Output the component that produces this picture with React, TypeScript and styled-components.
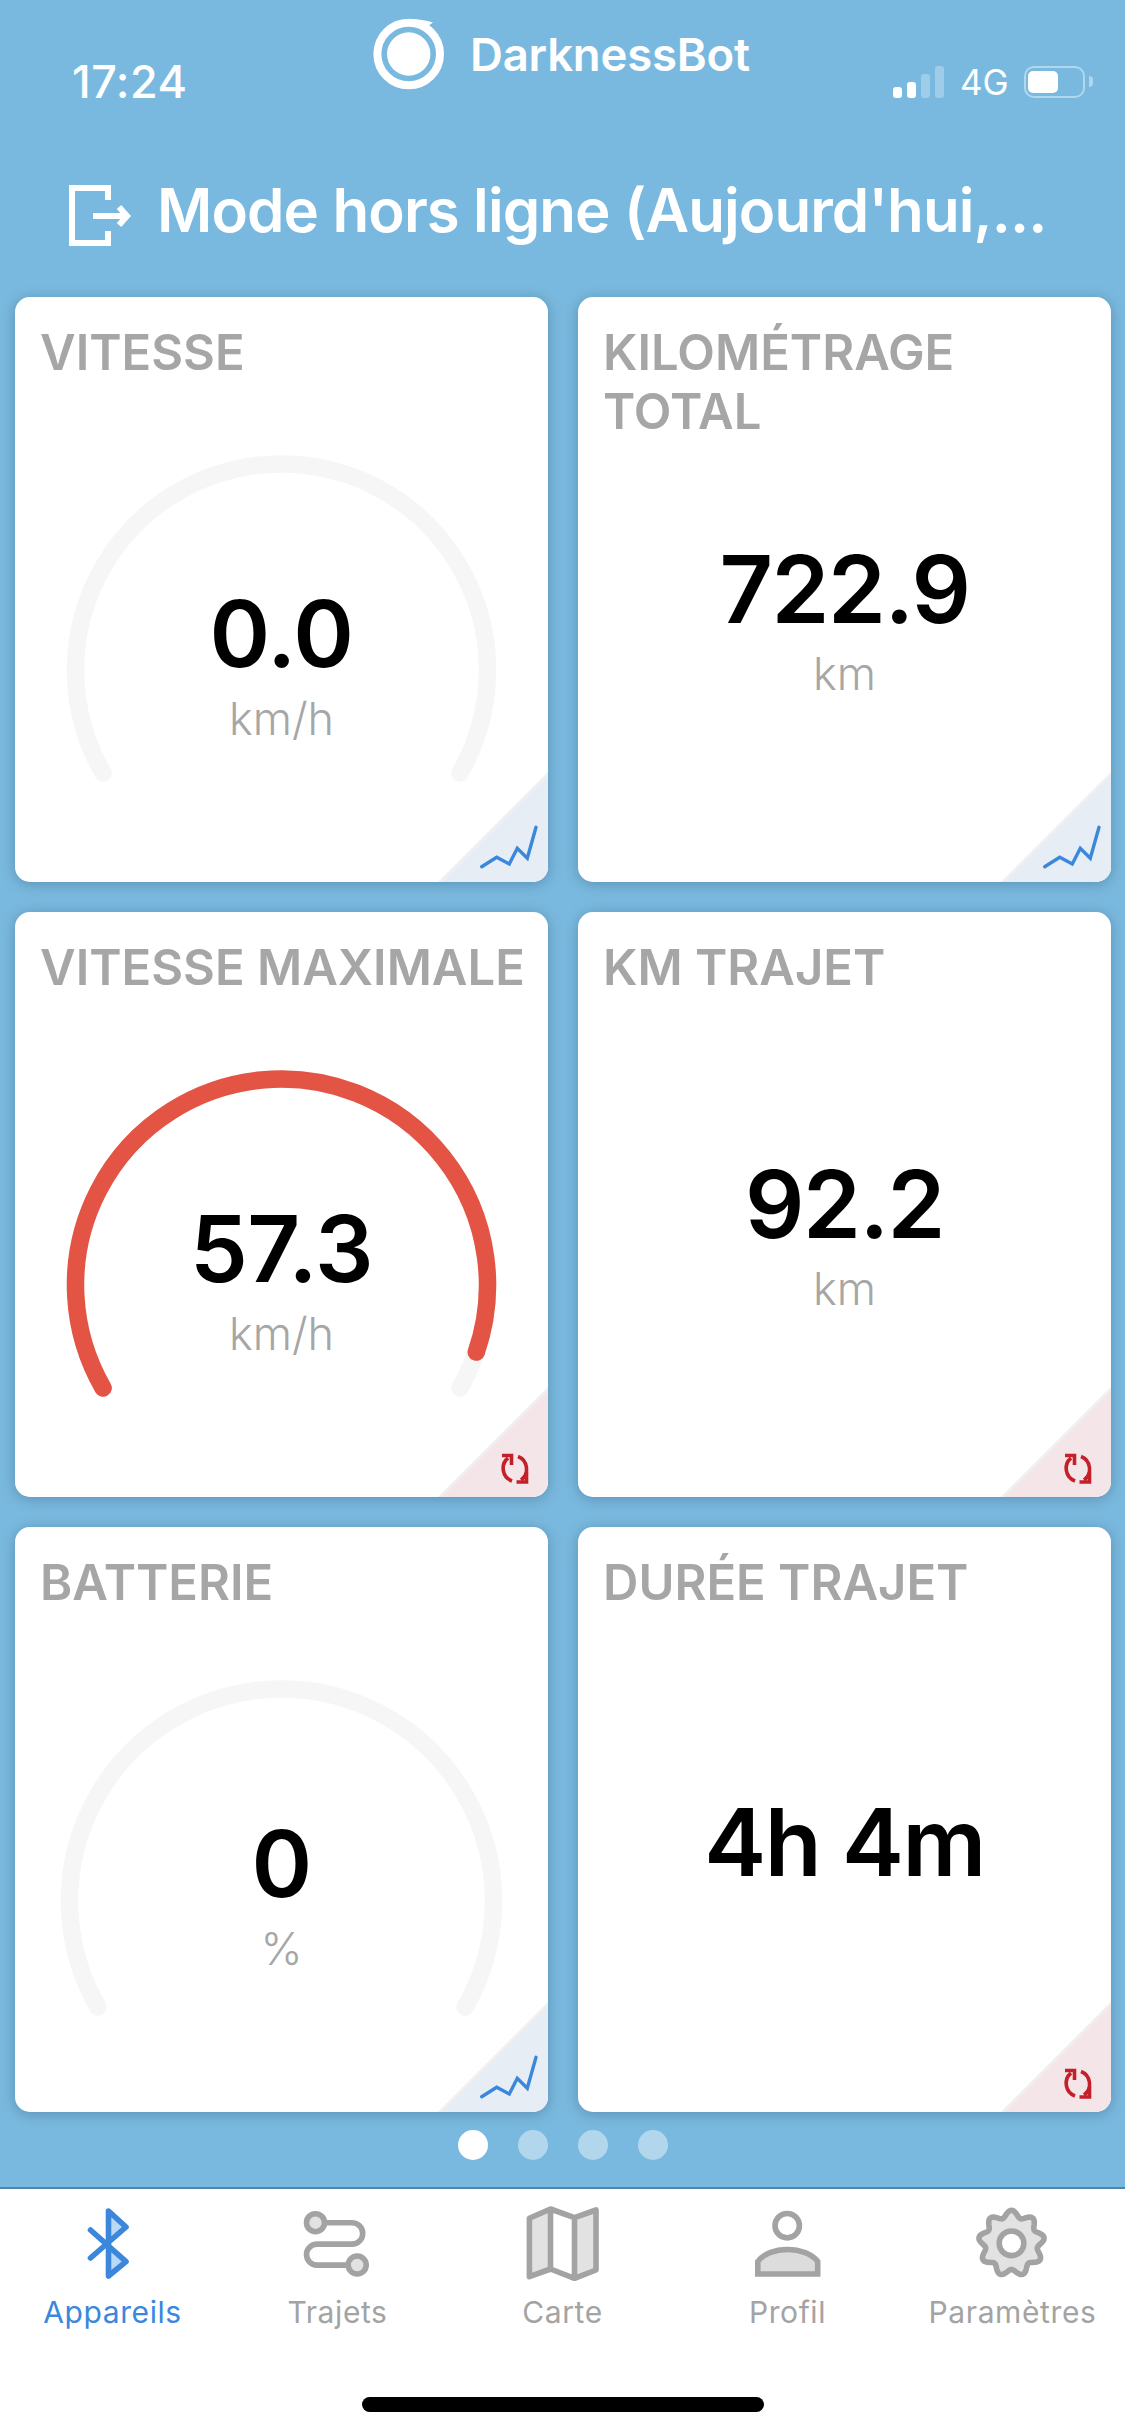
import React from "react";
import styled, { createGlobalStyle } from "styled-components";

const Global = createGlobalStyle`
  html, body { margin: 0; padding: 0; background: #7ab9df; }
  body { font-family: Inter, "Liberation Sans", sans-serif; }
  #root { width: 1125px; height: 2436px; }
`;

const Page = styled.div`
  width: 1125px;
  height: 2436px;
  background: #7ab9df;
  display: flex;
  flex-direction: column;
  overflow: hidden;
`;

const StatusBar = styled.div`
  height: 120px;
  display: flex;
  align-items: flex-start;
  color: #fff;
  flex: none;
`;

const Time = styled.div`
  width: 301px;
  margin: 57px 0 0 72px;
  font-size: 45px;
  line-height: 50px;
  font-weight: 500;
  letter-spacing: 0.5px;
`;

const Brand = styled.div`
  display: flex;
  align-items: center;
  gap: 25px;
  margin-top: 18px;
  height: 72px;
  width: 520px;
  font-size: 45.5px;
  font-weight: 600;
  letter-spacing: -0.2px;
`;

const Signal = styled.div`
  display: flex;
  align-items: flex-end;
  gap: 5px;
  height: 32px;
  margin: 66px 0 0 0;
  flex: none;
`;

const SignalBar = styled.i<{ $h: number; $dim?: boolean }>`
  display: block;
  width: 9px;
  height: ${(p) => p.$h}px;
  border-radius: 3px;
  background: ${(p) => (p.$dim ? "rgba(255,255,255,0.28)" : "#fff")};
`;

const Net = styled.span`
  font-size: 35px;
  font-weight: 400;
  line-height: 32px;
  margin: 0 0 0 11px;
`;

const Battery = styled.div`
  position: relative;
  width: 61px;
  height: 32px;
  box-sizing: border-box;
  border: 2.5px solid rgba(255, 255, 255, 0.42);
  border-radius: 10px;
  margin-left: 10px;
  padding: 2.5px;
  &::after {
    content: "";
    position: absolute;
    right: -10px;
    top: 8px;
    width: 4px;
    height: 11px;
    border-radius: 0 4px 4px 0;
    background: rgba(255, 255, 255, 0.42);
  }
`;

const BatteryFill = styled.div`
  width: 30px;
  height: 22px;
  border-radius: 5px;
  background: #fff;
`;

const Header = styled.div`
  height: 177px;
  flex: none;
  display: flex;
  align-items: flex-start;
  padding-left: 69px;
  box-sizing: border-box;
  color: #fff;
`;

const HeaderIcon = styled.svg`
  width: 62px;
  height: 62px;
  margin-top: 65px;
  flex: none;
`;

const HeaderTitle = styled.div`
  margin: 54px 0 0 26px;
  font-size: 60px;
  line-height: 72px;
  font-weight: 600;
  letter-spacing: -0.9px;
  white-space: nowrap;
`;

const Grid = styled.div`
  display: grid;
  grid-template-columns: 533px 533px;
  grid-auto-rows: 585px;
  gap: 30px;
  padding: 0 14px 0 15px;
  flex: none;
`;

const CardBox = styled.div`
  position: relative;
  background: #fff;
  border-radius: 15px;
  overflow: hidden;
`;

const CardShadow = styled.div`
  border-radius: 15px;
  box-shadow: 0 2px 14px rgba(20, 50, 80, 0.3);
`;

const CardTitle = styled.div`
  height: 120px;
  box-sizing: border-box;
  padding: 26px 20px 0 25px;
  font-size: 49px;
  line-height: 59px;
  font-weight: 600;
  color: #a6a6a6;
  white-space: pre-line;
`;

const CardBody = styled.div`
  position: relative;
  height: 465px;
`;

const GaugeSvg = styled.svg`
  display: block;
  width: 533px;
  height: 465px;
`;

const Readout = styled.div<{ $top: number }>`
  position: absolute;
  inset: 0;
  padding-top: ${(p) => p.$top}px;
  display: flex;
  flex-direction: column;
  align-items: center;
`;

const Value = styled.div<{ $big?: boolean }>`
  font-size: ${(p) => (p.$big ? 93 : 92)}px;
  line-height: 100px;
  font-weight: 600;
  color: #000;
  letter-spacing: ${(p) => (p.$big ? -1.5 : -0.5)}px;
  white-space: nowrap;
`;

const Unit = styled.div`
  margin-top: 5px;
  font-size: 45px;
  line-height: 60px;
  font-weight: 300;
  color: #a6a6a6;
`;

const Corner = styled.div<{ $kind: "live" | "trip" }>`
  position: absolute;
  right: 0;
  bottom: 0;
  width: 111px;
  height: 111px;
  background: linear-gradient(
    to bottom right,
    transparent 50%,
    rgba(0, 0, 0, 0.05) 50.5%,
    ${(p) => (p.$kind === "live" ? "#e6edf4" : "#f4e5e9")} 53%
  );
`;

const CornerIcon = styled.svg`
  display: block;
  width: 111px;
  height: 111px;
`;

const Pager = styled.div`
  display: flex;
  justify-content: center;
  gap: 30px;
  margin-top: 18px;
  flex: none;
`;

const Dot = styled.i<{ $on?: boolean }>`
  display: block;
  width: 30px;
  height: 30px;
  border-radius: 50%;
  background: ${(p) => (p.$on ? "#fff" : "rgba(255,255,255,0.42)")};
`;

const TabBar = styled.nav`
  margin-top: auto;
  height: 249px;
  box-sizing: border-box;
  flex: none;
  background: #fff;
  border-top: 2px solid #4f87ab;
  display: grid;
  grid-template-columns: repeat(5, 225px);
  position: relative;
`;

const Tab = styled.div<{ $active?: boolean }>`
  display: flex;
  flex-direction: column;
  align-items: center;
  padding-top: 16px;
  color: ${(p) => (p.$active ? "#3a87dc" : "#a3a3a3")};
`;

const TabIcon = styled.svg`
  display: block;
  width: 80px;
  height: 80px;
`;

const TabLabel = styled.span`
  margin-top: 9px;
  font-size: 30px;
  line-height: 36px;
  font-weight: 400;
  letter-spacing: 0.6px;
`;

const HomeIndicator = styled.div`
  position: absolute;
  left: 362px;
  top: 208px;
  width: 402px;
  height: 15px;
  border-radius: 8px;
  background: #000;
`;

const polar = (cx: number, cy: number, r: number, deg: number) => {
  const a = (deg * Math.PI) / 180;
  return [cx + r * Math.cos(a), cy + r * Math.sin(a)];
};

// angle measured clockwise from +x; arc runs from 150deg through 270deg to endDeg
const arc = (cx: number, cy: number, r: number, startDeg: number, endDeg: number) => {
  const [x1, y1] = polar(cx, cy, r, startDeg);
  const [x2, y2] = polar(cx, cy, r, endDeg);
  const large = endDeg - startDeg > 180 ? 1 : 0;
  return `M ${x1} ${y1} A ${r} ${r} 0 ${large} 1 ${x2} ${y2}`;
};

const Gauge = ({ r, cy, fillTo }: { r: number; cy: number; fillTo?: number }) => (
  <GaugeSvg viewBox="0 0 533 465">
    <path d={arc(266.5, cy, r, 150, 390)} fill="none" stroke="#f6f6f6" strokeWidth={17.5} strokeLinecap="round" />
    {fillTo !== undefined && (
      <path d={arc(266.5, cy, r, 150, fillTo)} fill="none" stroke="#e35444" strokeWidth={17.5} strokeLinecap="round" />
    )}
  </GaugeSvg>
);

const CornerMark = ({ kind }: { kind: "live" | "trip" }) => (
  <Corner $kind={kind}>
    <CornerIcon viewBox="-3 -3 111 111">
      {kind === "live" ? (
        <polyline
          points="41.7,92.7 56.7,83.3 69.3,90 77.3,74.3 87.3,84.3 96,53.3"
          fill="none"
          stroke="#3a87dc"
          strokeWidth={3.4}
          strokeLinecap="round"
          strokeLinejoin="miter"
        />
      ) : (
        <g fill="none" stroke="#c4202a" strokeWidth={3.6}>
          <path d="M 68 69 A 13.5 13.5 0 0 0 72 92" />
          <path d="M 78 67.5 A 13.5 13.5 0 0 1 81 91" />
          <path d="M 62 66.5 H 71.5 V 76" />
          <path d="M 76.5 93 H 86.5 V 83" />
        </g>
      )}
    </CornerIcon>
  </Corner>
);

const Card = ({
  title,
  kind,
  children,
}: {
  title: string;
  kind: "live" | "trip";
  children: React.ReactNode;
}) => (
  <CardShadow>
    <CardBox>
      <CardTitle>{title}</CardTitle>
      <CardBody>{children}</CardBody>
      <CornerMark kind={kind} />
    </CardBox>
  </CardShadow>
);

const gearPath = (() => {
  const pts: string[] = [];
  for (let i = 0; i < 216; i++) {
    const t = (i / 216) * Math.PI * 2;
    const r = 29.6 + 3.4 * Math.cos(9 * t);
    pts.push(`${(38.5 + r * Math.sin(t)).toFixed(2)} ${(38.3 - r * Math.cos(t)).toFixed(2)}`);
  }
  return `M ${pts.join(" L ")} Z`;
})();

const GREY = "#a3a3a3";
const LIGHT = "#e2e2e2";

export default function App() {
  return (
    <Page>
      <Global />
      <StatusBar>
        <Time>17:24</Time>
        <Brand>
          <svg width="72" height="72" viewBox="0 0 72 72">
            <circle cx="35.7" cy="36" r="31.3" fill="none" stroke="#fff" strokeWidth="8" />
            <circle cx="35.7" cy="36" r="21.7" fill="#fff" />
            <path d="M 34 1 Q 48 0.5 60 4.5 L 55 8 Q 46 5 34 5 Z" fill="#fff" />
          </svg>
          <span>DarknessBot</span>
        </Brand>
        <Signal>
          <SignalBar $h={11} />
          <SignalBar $h={16} />
          <SignalBar $h={24} $dim />
          <SignalBar $h={32} $dim />
          <Net>4G</Net>
          <Battery>
            <BatteryFill />
          </Battery>
        </Signal>
      </StatusBar>

      <Header>
        <HeaderIcon viewBox="0 0 62 62" fill="none" stroke="#fff" strokeWidth="6">
          <path d="M 39 15 V 3 H 3 V 58 H 39 V 46" />
          <path d="M 24 31 H 56" />
          <path d="M 50 22 L 58 31 L 50 40" />
        </HeaderIcon>
        <HeaderTitle>Mode hors ligne (Aujourd'hui,...</HeaderTitle>
      </Header>

      <Grid>
        <Card title="VITESSE" kind="live">
          <Gauge r={206} cy={253} />
          <Readout $top={167}>
            <Value>0.0</Value>
            <Unit>km/h</Unit>
          </Readout>
        </Card>
        <Card title={"KILOMÉTRAGE\nTOTAL"} kind="live">
          <Readout $top={122}>
            <Value $big>722.9</Value>
            <Unit>km</Unit>
          </Readout>
        </Card>
        <Card title="VITESSE MAXIMALE" kind="trip">
          <Gauge r={206} cy={253} fillTo={379} />
          <Readout $top={167}>
            <Value>57.3</Value>
            <Unit>km/h</Unit>
          </Readout>
        </Card>
        <Card title="KM TRAJET" kind="trip">
          <Readout $top={122}>
            <Value $big>92.2</Value>
            <Unit>km</Unit>
          </Readout>
        </Card>
        <Card title="BATTERIE" kind="live">
          <Gauge r={212} cy={254} />
          <Readout $top={167}>
            <Value>0</Value>
            <Unit>%</Unit>
          </Readout>
        </Card>
        <Card title="DURÉE TRAJET" kind="trip">
          <Readout $top={145}>
            <Value $big>4h 4m</Value>
          </Readout>
        </Card>
      </Grid>

      <Pager>
        <Dot $on />
        <Dot />
        <Dot />
        <Dot />
      </Pager>

      <TabBar>
        <Tab $active>
          <TabIcon viewBox="0 0 80 80">
            <path d="M 35.5 8 L 53 22 L 35.5 37 Z M 35.5 41 L 53 56.7 L 35.5 70 Z" fill="#b9d9f5" />
            <path
              d="M 17.5 25 L 53 56.7 L 35.5 71 V 6 L 53 22 L 17.5 53"
              fill="none"
              stroke="#3a87dc"
              strokeWidth="5.6"
              strokeLinecap="round"
              strokeLinejoin="round"
            />
          </TabIcon>
          <TabLabel>Appareils</TabLabel>
        </Tab>
        <Tab>
          <TabIcon viewBox="0 0 80 80">
            <path
              d="M 26 17.7 H 54 a 10.7 10.7 0 0 1 0 21.4 H 19 a 10.5 10.5 0 0 0 0 21 H 50"
              fill="none"
              stroke={GREY}
              strokeWidth="5.6"
            />
            <circle cx="17.5" cy="17.7" r="9" fill={LIGHT} stroke={GREY} strokeWidth="5.6" />
            <circle cx="59.2" cy="60" r="9" fill={LIGHT} stroke={GREY} strokeWidth="5.6" />
          </TabIcon>
          <TabLabel>Trajets</TabLabel>
        </Tab>
        <Tab>
          <TabIcon viewBox="0 0 80 80">
            <path d="M 6.4 13.3 L 27.5 4 V 64 L 6.4 71.7 Z M 51.5 12.7 L 73 5 V 65 L 51.5 73.3 Z" fill={LIGHT} />
            <path
              d="M 6.4 13.3 L 27.5 4 L 51.5 12.7 L 73 5 V 65 L 51.5 73.3 L 27.5 64 L 6.4 71.7 Z M 27.5 4 V 64 M 51.5 12.7 V 73.3"
              fill="none"
              stroke={GREY}
              strokeWidth="5.6"
              strokeLinejoin="round"
            />
          </TabIcon>
          <TabLabel>Carte</TabLabel>
        </Tab>
        <Tab>
          <TabIcon viewBox="0 0 80 80">
            <circle cx="39.2" cy="20.7" r="12.2" fill="#fff" stroke={GREY} strokeWidth="5.6" />
            <path
              d="M 9.8 69 V 56.5 C 15 49 27 44.5 39.5 44.5 C 52 44.5 64 49 69.7 56.5 V 69 Z"
              fill="#dcdcdc"
              stroke={GREY}
              strokeWidth="5.6"
            />
          </TabIcon>
          <TabLabel>Profil</TabLabel>
        </Tab>
        <Tab>
          <TabIcon viewBox="0 0 80 80">
            <path d={gearPath} fill={LIGHT} stroke={GREY} strokeWidth="5.6" strokeLinejoin="round" />
            <circle cx="38.5" cy="38.3" r="12.3" fill="#fff" stroke={GREY} strokeWidth="5.6" />
          </TabIcon>
          <TabLabel>Paramètres</TabLabel>
        </Tab>
        <HomeIndicator />
      </TabBar>
    </Page>
  );
}
